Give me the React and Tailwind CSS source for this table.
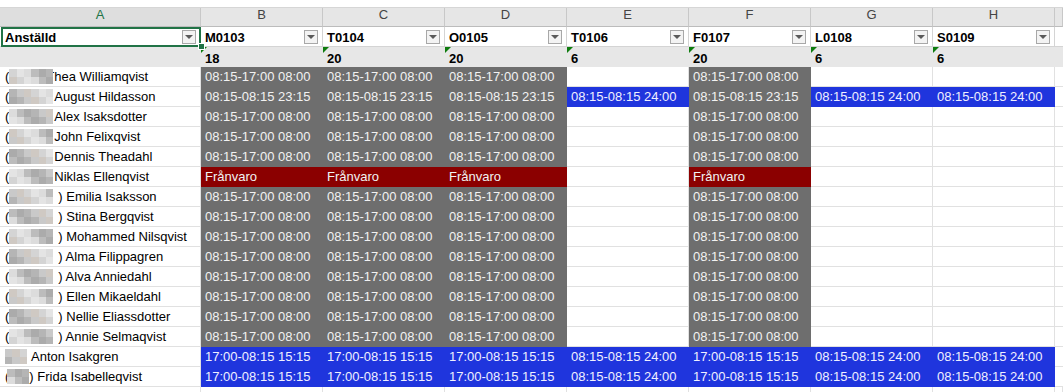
import React from 'react';

const LETTERS = ['A', 'B', 'C', 'D', 'E', 'F', 'G', 'H', ''];
const CODES = ['M0103', 'T0104', 'O0105', 'T0106', 'F0107', 'L0108', 'S0109'];
const COUNTS = ['18', '20', '20', '6', '20', '6', '6'];

const DAY = { t: '08:15-17:00 08:00', c: 'g' };
const LONG_G = { t: '08:15-08:15 23:15', c: 'g' };
const FULL_B = { t: '08:15-08:15 24:00', c: 'b' };
const NIGHT_B = { t: '17:00-08:15 15:15', c: 'b' };
const AWAY = { t: 'Frånvaro', c: 'r' };

const dayRow = [DAY, DAY, DAY, null, DAY, null, null];
const blueRow = [NIGHT_B, NIGHT_B, NIGHT_B, FULL_B, NIGHT_B, FULL_B, FULL_B];

const rows = [
  { kind: 'thea', name: 'Thea Williamqvist', cells: dayRow },
  { kind: 'open', name: 'August Hildasson', cells: [LONG_G, LONG_G, LONG_G, FULL_B, LONG_G, FULL_B, FULL_B] },
  { kind: 'open', name: 'Alex Isaksdotter', cells: dayRow },
  { kind: 'open', name: 'John Felixqvist', cells: dayRow },
  { kind: 'open', name: 'Dennis Theadahl', cells: dayRow },
  { kind: 'open', name: 'Niklas Ellenqvist', cells: [AWAY, AWAY, AWAY, null, AWAY, null, null] },
  { kind: 'closed', name: 'Emilia Isaksson', cells: dayRow },
  { kind: 'closed', name: 'Stina Bergqvist', cells: dayRow },
  { kind: 'closed', name: 'Mohammed Nilsqvist', cells: dayRow },
  { kind: 'closed', name: 'Alma Filippagren', cells: dayRow },
  { kind: 'closed', name: 'Alva Anniedahl', cells: dayRow },
  { kind: 'closed', name: 'Ellen Mikaeldahl', cells: dayRow },
  { kind: 'closed', name: 'Nellie Eliassdotter', cells: dayRow },
  { kind: 'closed', name: 'Annie Selmaqvist', cells: dayRow },
  { kind: 'anton', name: 'Anton Isakgren', cells: blueRow },
  { kind: 'frida', name: 'Frida Isabelleqvist', cells: blueRow },
];

const fills = {
  g: 'bg-[#6e6e6e] border-[#6e6e6e] text-[#f2f2f2]',
  b: 'bg-[#1f35dd] border-[#1f35dd] text-[#f0f0ff]',
  r: 'bg-[#8b0000] border-[#8b0000] text-[#f2f2f2]',
};

const blurTones = [
  'bg-[#d4d4d4]',
  'bg-[#bcbcbc]',
  'bg-[#c9c9c9]',
  'bg-[#e4e4e4]',
  'bg-[#ababab]',
  'bg-[#cfc9c3]',
  'bg-[#dcdcdc]',
  'bg-[#b5b5b5]',
];

// pixelated mask over the personal numbers
const Blur = ({ cols, seed, className }) => {
  const blocks = [];
  for (let r = 0; r < 2; r++) {
    for (let c = 0; c < cols; c++) {
      blocks.push(blurTones[(c * 3 + r * 5 + seed * 7) % blurTones.length]);
    }
  }
  return (
    <div className={`relative z-10 grid grid-rows-2 h-[15px] shrink-0 ${cols === 6 ? 'grid-cols-6' : 'grid-cols-3'} ${className}`}>
      {blocks.map((cls, i) => (
        <div key={i} className={cls} />
      ))}
    </div>
  );
};

const NameCell = ({ row, idx }) => {
  let inner;
  if (row.kind === 'thea') {
    inner = (
      <>
        <span>(</span>
        <Blur cols={6} seed={idx} className="w-[44px]" />
        <span className="ml-[-7px]">{row.name}</span>
      </>
    );
  } else if (row.kind === 'open') {
    inner = (
      <>
        <span>(</span>
        <Blur cols={6} seed={idx} className="w-[44px]" />
        <span className="ml-[1px]">{row.name}</span>
      </>
    );
  } else if (row.kind === 'closed') {
    inner = (
      <>
        <span>(</span>
        <Blur cols={6} seed={idx} className="w-[44px]" />
        <span className="ml-[5px] whitespace-pre">{') ' + row.name}</span>
      </>
    );
  } else if (row.kind === 'anton') {
    inner = (
      <>
        <Blur cols={3} seed={idx} className="w-[22px]" />
        <span className="ml-[4px]">{row.name}</span>
      </>
    );
  } else {
    inner = (
      <>
        <span>(</span>
        <Blur cols={3} seed={idx} className="w-[22px] ml-[-2px]" />
        <span className="whitespace-pre">{') ' + row.name}</span>
      </>
    );
  }
  return (
    <div className="flex items-center h-[20px] pl-[5px] bg-white border-r border-b border-[#e1e1e1] text-black overflow-hidden whitespace-nowrap">
      {inner}
    </div>
  );
};

const DataCell = ({ cell }) => (
  <div
    className={`h-[20px] pl-[4px] border-r border-b leading-[19px] whitespace-nowrap overflow-hidden ${
      cell ? fills[cell.c] : 'bg-white border-[#e1e1e1]'
    }`}
  >
    {cell ? cell.t : ''}
  </div>
);

const FilterButton = () => (
  <div className="absolute right-[4px] top-[3px] w-[14px] h-[14px] border border-[#a8a8a8] bg-[#f3f3f3] flex items-center justify-center">
    <div className="w-0 h-0 border-l-[4px] border-r-[4px] border-t-[4px] border-l-transparent border-r-transparent border-t-[#5a5a5a]" />
  </div>
);

const App = () => {
  return (
    <div className="w-[1063px] h-[392px] overflow-hidden bg-white font-['Liberation_Sans',Arial,sans-serif] text-[13px]">
      <div className="h-[8px] bg-white border-b border-[#d6d6d6]" />
      <div className="grid grid-cols-[201px_repeat(7,122px)_1fr]">
        {/* Column letters */}
        {LETTERS.map((l, i) => (
          <div
            key={'L' + i}
            className={`h-[19px] flex items-end justify-center pb-[2px] border-r border-b border-r-[#c8c8c8] border-b-[#bcbcbc] ${
              i === 0 ? 'bg-[#dedede] text-[#217346]' : 'bg-[#e6e6e6] text-[#444444]'
            }`}
          >
            {l}
          </div>
        ))}

        {/* Header row */}
        <div className="relative h-[20px] pl-[5px] pt-[1px] leading-[19px] font-bold text-black border-r border-b border-[#d4d4d4]">
          Anställd
          <FilterButton />
          <div className="absolute top-0 left-px right-[-1px] bottom-[-1px] border-2 border-[#217346] z-10 pointer-events-none" />
          <div className="absolute right-[-5px] bottom-[-4px] w-[7px] h-[7px] bg-[#217346] border border-white z-20" />
        </div>
        {CODES.map((c) => (
          <div key={c} className="relative h-[20px] pl-[4px] pt-[1px] leading-[19px] font-bold text-black border-r border-b border-[#d4d4d4]">
            {c}
            <FilterButton />
          </div>
        ))}
        <div className="h-[20px] border-b border-[#d4d4d4]" />

        {/* Count row */}
        <div className="h-[20px] bg-[#e7e7e7]" />
        {COUNTS.map((n, i) => (
          <div key={'N' + i} className="relative h-[20px] pl-[4px] pt-[2px] leading-[19px] font-bold text-black bg-[#e7e7e7]">
            <div className="absolute top-0 left-0 w-0 h-0 border-t-[6px] border-r-[6px] border-t-[#0e7c0e] border-r-transparent" />
            {n}
          </div>
        ))}
        <div className="h-[20px] bg-[#e7e7e7]" />

        {/* Data rows */}
        {rows.map((row, ri) => (
          <React.Fragment key={row.name}>
            <NameCell row={row} idx={ri} />
            {row.cells.map((cell, ci) => (
              <DataCell key={ci} cell={cell} />
            ))}
            <div className="h-[20px] border-b border-[#e1e1e1] bg-white" />
          </React.Fragment>
        ))}

        {/* partially visible next row */}
        {LETTERS.map((l, i) => (
          <div key={'E' + i} className="h-[20px] border-r border-b border-[#e1e1e1] bg-white" />
        ))}
      </div>
    </div>
  );
};

export default App;
